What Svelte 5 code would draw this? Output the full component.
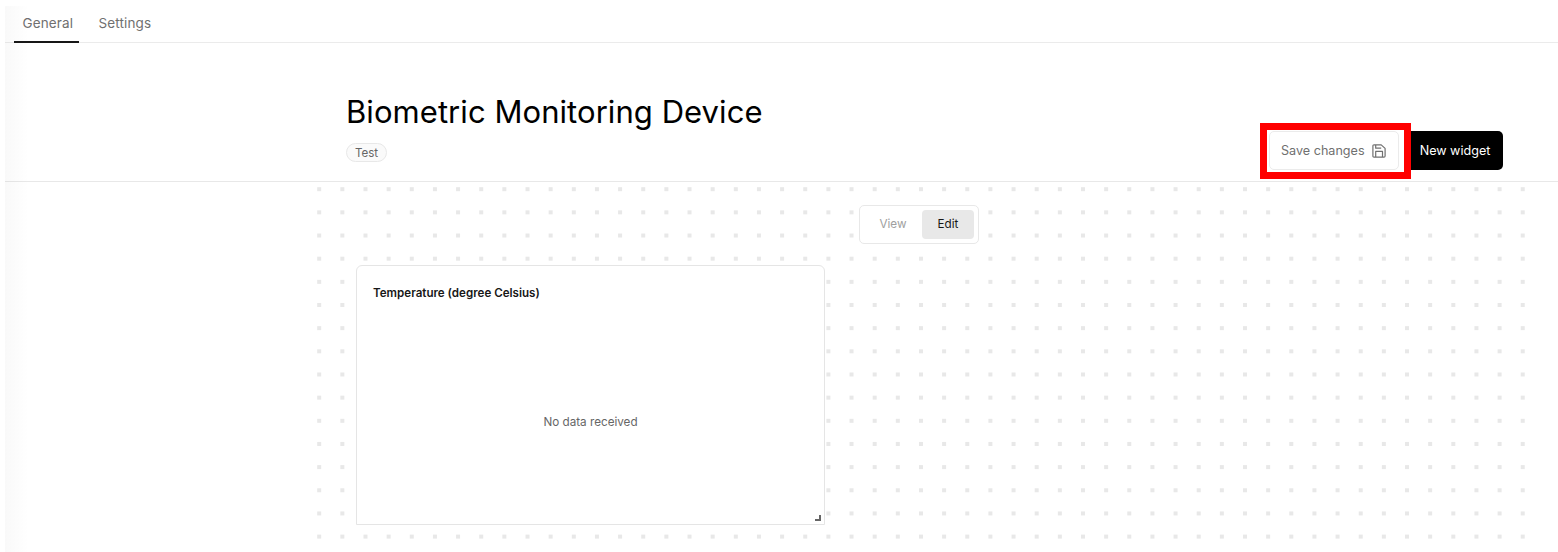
<script>
  const tabs = ['General', 'Settings'];
  const columns = Array.from({ length: 53 }, (_, i) => 0.2 + i * 23.145);
  const rows = Array.from({ length: 16 }, (_, i) => 0.2 + i * 23.16);
</script>

<div class="app">
  <nav class="tabs">
    {#each tabs as tab, i}
      <div class="tab" class:active={i === 0}><span>{tab}</span></div>
    {/each}
  </nav>

  <header class="header">
    <div class="heading">
      <h1>Biometric Monitoring Device</h1>
      <span class="tag">Test</span>
    </div>
    <div class="actions">
      <div class="highlight">
        <button class="save">
          <span>Save changes</span>
          <svg width="14" height="14" viewBox="0 0 14 14" fill="none" stroke="#707070" stroke-width="1.2" stroke-linejoin="round">
            <path d="M2 .9H9.2L13.1 4.4V12Q13.1 13.1 12 13.1H2Q.9 13.1 .9 12V2Q.9 .9 2 .9Z" />
            <path d="M3.7 1V4.2H9.2" />
            <path d="M3.7 13V7.4H10.5V13" />
          </svg>
        </button>
      </div>
      <button class="new">New widget</button>
    </div>
  </header>

  <main class="board">
    <svg class="dots" width="1211" height="355" fill="#e8e8e8">
      {#each rows as y}
        {#each columns as x}
          <rect {x} {y} width="4" height="4" />
        {/each}
      {/each}
    </svg>
    <div class="switch">
      <button>View</button>
      <button class="selected">Edit</button>
    </div>
    <section class="widget">
      <h2>Temperature (degree Celsius)</h2>
      <p>No data received</p>
      <span class="grip"></span>
    </section>
  </main>
  <div class="edge"></div>
</div>

<style>
  :global(body) {
    background: #fff;
    overflow: hidden;
  }

  .app {
    position: relative;
    box-sizing: border-box;
    width: 1558px;
    height: 552px;
    padding: 6px 0 0 5px;
    overflow: hidden;
    font-family: Inter, sans-serif;
    color: #000;
  }

  button {
    box-sizing: border-box;
    margin: 0;
    padding: 0;
    border: 0;
    background: none;
    font-family: inherit;
    white-space: nowrap;
  }

  .tabs {
    display: flex;
    gap: 11px;
    box-sizing: border-box;
    height: 37px;
    padding-left: 9px;
    border-bottom: 1px solid #ebebeb;
  }

  .tab {
    box-sizing: border-box;
    height: 37px;
    padding: 0 8.5px;
    border-bottom: 2px solid transparent;
    font-size: 13.5px;
    letter-spacing: 0.12px;
    line-height: 34px;
    color: #707070;
  }

  .tab.active {
    width: 65px;
    border-color: #171717;
  }

  .header {
    display: flex;
    justify-content: space-between;
    box-sizing: border-box;
    height: 139px;
    padding: 0 55px 0 341px;
    border-bottom: 1px solid #e8e8e8;
  }

  .heading {
    display: flex;
    flex-direction: column;
    align-items: flex-start;
    padding-top: 49px;
  }

  h1 {
    margin: 0;
    font-size: 31px;
    letter-spacing: 0.06px;
    line-height: 40px;
    font-weight: 400;
  }

  .tag {
    box-sizing: border-box;
    width: 41px;
    height: 19px;
    margin-top: 11px;
    border: 1px solid #e8e8e8;
    border-radius: 10px;
    background: #fafafa;
    font-size: 11.6px;
    line-height: 18px;
    text-align: center;
    color: #666;
  }

  .actions {
    display: flex;
    align-items: flex-start;
    padding-top: 80px;
  }

  .highlight {
    box-sizing: border-box;
    width: 151px;
    height: 56px;
    border: 7px solid #f00;
    padding: 1px 5px 2px 2px;
  }

  .save {
    display: flex;
    align-items: center;
    justify-content: space-between;
    width: 130px;
    height: 39px;
    padding: 0 12px 0 11px;
    border: 1px solid #ebebeb;
    border-radius: 5px;
    font-size: 12.6px;
    color: #707070;
  }

  .save span {
    padding-bottom: 1px;
  }

  .new {
    width: 92px;
    height: 39px;
    margin-top: 8px;
    padding: 0 4px 1px 0;
    border-radius: 0 5px 5px 0;
    background: #000;
    color: #fff;
    font-size: 12.6px;
  }

  .board {
    position: relative;
    height: 370px;
    padding: 23px 0 0 351px;
  }

  .dots {
    position: absolute;
    left: 312px;
    top: 5px;
  }

  .switch {
    position: relative;
    display: flex;
    box-sizing: border-box;
    width: 120px;
    height: 39px;
    margin-left: 503px;
    padding: 4px;
    border: 1px solid #e8e8e8;
    border-radius: 5px;
    background: #fff;
  }

  .switch button {
    width: 58px;
    height: 29px;
    padding-bottom: 1px;
    font-size: 11.7px;
    color: #a0a0a0;
  }

  .switch .selected {
    width: 52px;
    border-radius: 4px;
    background: #e8e8e8;
    color: #171717;
  }

  .widget {
    position: relative;
    box-sizing: border-box;
    width: 469px;
    height: 260px;
    margin-top: 21px;
    padding: 17px 16px;
    border: 1px solid #e5e5e5;
    border-radius: 6px 6px 0 0;
    background: #fff;
  }

  h2 {
    margin: 0;
    font-size: 11.6px;
    line-height: 20px;
    font-weight: 600;
    color: #171717;
  }

  p {
    margin: 109px 0 0;
    font-size: 11.7px;
    line-height: 20px;
    text-align: center;
    color: #666;
  }

  .grip {
    position: absolute;
    right: 3px;
    bottom: 3px;
    width: 4px;
    height: 4px;
    border-right: 2px solid #666;
    border-bottom: 2px solid #666;
  }

  .edge {
    position: absolute;
    left: 5px;
    top: 6px;
    width: 24px;
    height: 546px;
    background: linear-gradient(90deg, rgba(0, 0, 0, 0.025), rgba(0, 0, 0, 0));
  }
</style>
